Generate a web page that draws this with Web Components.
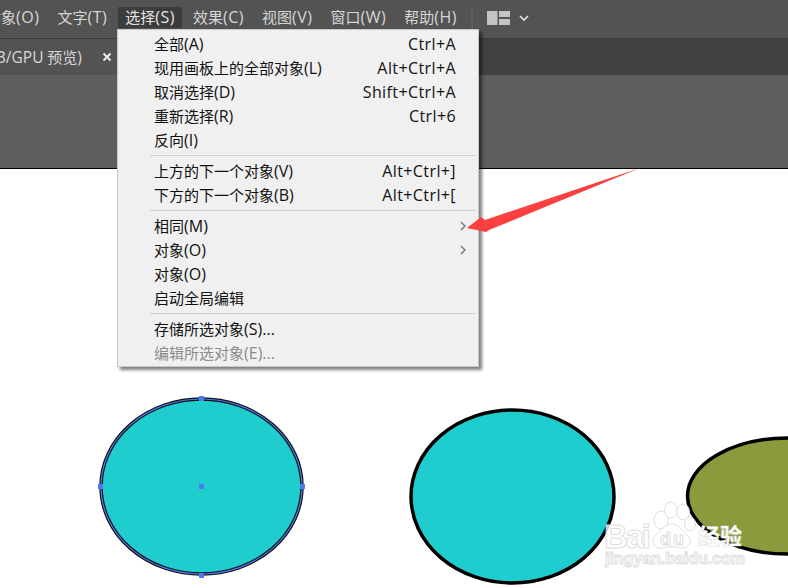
<!DOCTYPE html>
<html>
<head>
<meta charset="utf-8">
<style>
  html, body { margin: 0; height: 100%; overflow: hidden; background: #fff; }
  body { font: 15px "Open Sans", "Noto Sans CJK SC", sans-serif; }
</style>
</head>
<body>
<app-window></app-window>
<script>
class TopMenubar extends HTMLElement {
  connectedCallback() {
    this.attachShadow({ mode: 'open' });
    this.shadowRoot.innerHTML = `
      <style>
        :host { display: flex; align-items: flex-end; height: 39px; box-sizing: border-box; padding: 0 0 10px 0;
          background: #535353; color: #d6d6d6; font-size: 15px; white-space: nowrap; overflow: hidden;
          border-bottom: 1px solid #3a3a3a; }
        span { display: block; line-height: 21px; height: 21px; padding: 0 7px; margin-right: 4px; }
        i { font-style: normal; font-size: 16px; letter-spacing: .5px; }
        .cut { margin-left: -14px; margin-right: 11px; padding: 0; }
        .on { background: #3c3c3c; color: #e4e4e4; border-radius: 1px; }
        .sep { width: 2px; height: 30px; padding: 0; margin: 0 14px 0 3px; background: #5e5e5e; position: relative; top: 10px; }
        svg { display: block; }
      </style>
      <span class="cut">对象<i>(O)</i></span>
      <span>文字<i>(T)</i></span>
      <span class="on">选择<i>(S)</i></span>
      <span>效果<i>(C)</i></span>
      <span>视图<i>(V)</i></span>
      <span>窗口<i>(W)</i></span>
      <span>帮助<i>(H)</i></span>
      <span class="sep"></span>
      <svg width="44" height="16" viewBox="0 0 44 16" style="margin-bottom:2px">
        <rect x="0" y="1" width="10.500" height="14" fill="#c4c4c4"/>
        <rect x="12" y="1" width="11" height="6" fill="#c4c4c4"/>
        <rect x="12" y="9" width="11" height="6" fill="#c4c4c4"/>
        <path d="M33 6l4 4 4-4" fill="none" stroke="#e2e2e2" stroke-width="1.600"/>
      </svg>
    `;
  }
}
customElements.define('top-menubar', TopMenubar);

class TabStrip extends HTMLElement {
  connectedCallback() {
    this.attachShadow({ mode: 'open' });
    this.shadowRoot.innerHTML = `
      <style>
        :host { display: flex; height: 36px; background: #424242; color: #d8d8d8; font-size: 15px; white-space: nowrap; }
        .tab { display: flex; align-items: center; width: 117px; overflow: hidden; background: #535353; box-sizing: border-box; }
        .name { margin-left: -25px; flex: none; width: 127px; }
        i { font-style: normal; font-size: 15.500px; }
        svg { flex: none; display: block; margin-top: -1px; }
      </style>
      <div class="tab"><span class="name"><i>RGB/GPU</i> 预览<i>)</i></span><svg width="10" height="10" viewBox="0 0 10 10"><path d="M1.500 1.500l7 7M8.500 1.500l-7 7" stroke="#eee" stroke-width="2"/></svg></div>
    `;
  }
}
customElements.define('tab-strip', TabStrip);

class MenuRow extends HTMLElement {
  connectedCallback() {
    const key = this.getAttribute('key') || '';
    const more = this.hasAttribute('more');
    this.attachShadow({ mode: 'open' });
    this.shadowRoot.innerHTML = `
      <style>
        :host { display: flex; align-items: center; justify-content: space-between; box-sizing: border-box; height: 24px;
          padding: 0 22px 0 36px; font-size: 15px; color: #111; white-space: nowrap; }
        :host([off]) { color: #8a8a8a; }
        ::slotted(i) { font-style: normal; font-size: 16px; }
        .label { line-height: 20px; }
        .key { font-size: 16px; letter-spacing: .4px; }
        svg { margin-right: -10px; display: block; }
      </style>
      <span class="label"><slot></slot></span>
      ${key ? `<span class="key">${key}</span>` : ''}
      ${more ? `<svg width="6" height="10" viewBox="0 0 6 10"><path d="M1 1l4 4-4 4" fill="none" stroke="#666" stroke-width="1.100"/></svg>` : ''}
    `;
  }
}
customElements.define('menu-row', MenuRow);

class MenuSep extends HTMLElement {
  connectedCallback() {
    this.attachShadow({ mode: 'open' });
    this.shadowRoot.innerHTML = `
      <style>
        :host { display: block; height: 1px; margin: 3px 2px 3px 32px; background: #d2d2d2; }
      </style>
    `;
  }
}
customElements.define('menu-sep', MenuSep);

class SelectMenu extends HTMLElement {
  connectedCallback() {
    this.attachShadow({ mode: 'open' });
    this.shadowRoot.innerHTML = `
      <style>
        :host { position: absolute; left: 117px; top: 29px; width: 362px; height: 338px; box-sizing: border-box;
          padding: 2px 0 0; background: #f0f0f0; border: 1px solid #c8c8c8;
          box-shadow: 3px 3px 3px rgba(0,0,0,.5); }
      </style>
      <slot></slot>
    `;
  }
}
customElements.define('select-menu', SelectMenu);

class ArtCanvas extends HTMLElement {
  connectedCallback() {
    this.attachShadow({ mode: 'open' });
    this.shadowRoot.innerHTML = `
      <style>
        :host { display: block; position: absolute; left: 0; top: 0; width: 788px; height: 588px; pointer-events: none; }
        svg { display: block; }
        .wm { fill: rgba(255,255,255,.8); stroke: #dedede; stroke-width: 1; }
        text.wm { font-family: "Liberation Sans", sans-serif; font-weight: 700; }
        text.cn { font-family: "Noto Sans CJK SC", sans-serif; fill: #fff; stroke: #dedede; stroke-width: .6; font-weight: 700; }
      </style>
      <svg width="788" height="588" viewBox="0 0 788 588">
        <ellipse cx="201.500" cy="486.500" rx="100.500" ry="87.500" fill="#20cdce" stroke="#111" stroke-width="3.500"/>
        <ellipse cx="201.500" cy="486.500" rx="100.500" ry="87.500" fill="none" stroke="#4a7bf0" stroke-width="1.200"/>
        <g fill="#4a7bf0">
          <rect x="199" y="396" width="5" height="5"/>
          <rect x="199" y="573" width="5" height="5"/>
          <rect x="98" y="484" width="5" height="5"/>
          <rect x="300" y="484" width="5" height="5"/>
          <rect x="199" y="484" width="5" height="5"/>
        </g>
        <ellipse cx="512.500" cy="496.500" rx="101.500" ry="86.500" fill="#20cdce" stroke="#000" stroke-width="3.500"/>
        <ellipse cx="788" cy="496" rx="100.500" ry="58" fill="#8a9a3c" stroke="#000" stroke-width="3.500"/>
        <g class="wm">
          <ellipse cx="661" cy="520" rx="7" ry="9"/>
          <ellipse cx="671" cy="510" rx="6.500" ry="8"/>
          <ellipse cx="683" cy="512" rx="6.500" ry="8"/>
          <ellipse cx="690" cy="524" rx="5.500" ry="7"/>
          <path d="M672 524c8 0 10 7 15 11 6 5 3 14-6 13-6-1-12-2-18 0-9 2-13-8-7-13 5-4 8-11 16-11z"/>
        </g>
        <text class="wm" x="604" y="548" font-size="33" textLength="47">Bai</text>
        <text class="wm" x="660" y="545" font-size="18" textLength="24" stroke-width=".7">du</text>
        <text class="cn" x="698" y="544" font-size="22">经验</text>
        <text class="wm" x="605" y="564" font-size="16" textLength="140" stroke-width=".8">jingyan.baidu.com</text>
      </svg>
    `;
  }
}
customElements.define('art-canvas', ArtCanvas);

class PointerArrow extends HTMLElement {
  connectedCallback() {
    this.attachShadow({ mode: 'open' });
    this.shadowRoot.innerHTML = `
      <style>
        :host { display: block; position: absolute; left: 460px; top: 160px; width: 190px; height: 80px; pointer-events: none; }
        svg { display: block; }
      </style>
      <svg width="190" height="80" viewBox="460 160 190 80">
        <polygon points="640,168 485,220 481,217 467,228 486,232 489,230" fill="#fa4040"/>
      </svg>
    `;
  }
}
customElements.define('pointer-arrow', PointerArrow);

class AppWindow extends HTMLElement {
  connectedCallback() {
    this.attachShadow({ mode: 'open' });
    this.shadowRoot.innerHTML = `
      <style>
        :host { display: block; position: relative; width: 788px; height: 588px; overflow: hidden; background: #fff; }
        .options { height: 93px; background: #5e5e5e; border-bottom: 1px solid #000; }
      </style>
      <top-menubar></top-menubar>
      <tab-strip></tab-strip>
      <div class="options"></div>
      <art-canvas></art-canvas>
      <select-menu>
        <menu-row key="Ctrl+A">全部<i>(A)</i></menu-row>
        <menu-row key="Alt+Ctrl+A">现用画板上的全部对象<i>(L)</i></menu-row>
        <menu-row key="Shift+Ctrl+A">取消选择<i>(D)</i></menu-row>
        <menu-row key="Ctrl+6">重新选择<i>(R)</i></menu-row>
        <menu-row>反向<i>(I)</i></menu-row>
        <menu-sep></menu-sep>
        <menu-row key="Alt+Ctrl+]">上方的下一个对象<i>(V)</i></menu-row>
        <menu-row key="Alt+Ctrl+[">下方的下一个对象<i>(B)</i></menu-row>
        <menu-sep></menu-sep>
        <menu-row more>相同<i>(M)</i></menu-row>
        <menu-row more>对象<i>(O)</i></menu-row>
        <menu-row>对象<i>(O)</i></menu-row>
        <menu-row>启动全局编辑</menu-row>
        <menu-sep></menu-sep>
        <menu-row>存储所选对象<i>(S)...</i></menu-row>
        <menu-row off>编辑所选对象<i>(E)...</i></menu-row>
      </select-menu>
      <pointer-arrow></pointer-arrow>
    `;
  }
}
customElements.define('app-window', AppWindow);
</script>
</body>
</html>
